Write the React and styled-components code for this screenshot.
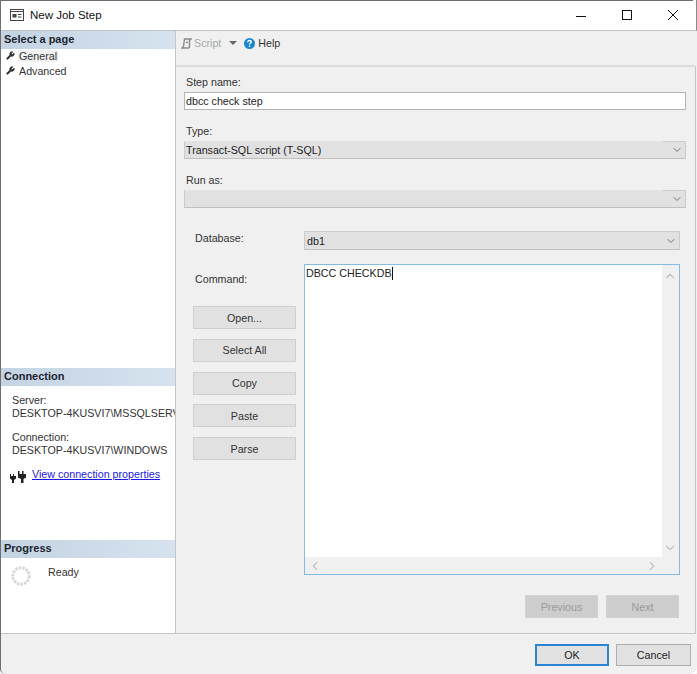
import React from 'react'
import styled, { createGlobalStyle } from 'styled-components'
import { ChevronDown, ChevronUp, ChevronLeft, ChevronRight, Wrench } from 'lucide-react'

const GlobalStyle = createGlobalStyle`
    html, body {
        margin: 0;
        padding: 0;
        background: #fff;
    }
    * {
        box-sizing: border-box;
    }
`;

const Window = styled.div`
    width: 697px;
    height: 674px;
    display: flex;
    flex-direction: column;
    background: #f0f0f0;
    border-left: 1px solid #6e6e6e;
    border-bottom-left-radius: 5px;
    border-bottom-right-radius: 7px;
    font-family: "Liberation Sans", Arial, sans-serif;
    font-size: 10.7px;
    color: #222;
    overflow: hidden;
`;

const TitleBar = styled.div`
    height: 31px;
    flex: none;
    display: flex;
    align-items: center;
    background: linear-gradient(#6e6e6e, #6e6e6e) no-repeat 0 0 / 692px 1px, #fff;
    border-right: 1px solid #8a8a8a;
    border-bottom: 1px solid #c4c4c4;
    padding-left: 9px;
`;

const TitleText = styled.span`
    font-size: 11.5px;
    color: #111;
    margin-left: 6px;
    flex: 1;
`;

const WindowButton = styled.svg`
    width: 46px;
    height: 12px;
    flex: none;
`;

const Body = styled.div`
    height: 603px;
    flex: none;
    display: flex;
`;

const Sidebar = styled.div`
    width: 175px;
    flex: none;
    display: flex;
    flex-direction: column;
    background: #fff;
    border-right: 1px solid #c4c4c4;
    border-bottom: 1px solid #c4c4c4;
`;

const SideHeader = styled.div`
    height: 18px;
    flex: none;
    padding-left: 3px;
    line-height: 17px;
    font-weight: bold;
    font-size: 11px;
    color: #1c2530;
    background: linear-gradient(90deg, #c4d3e2 0%, #d6e3ef 100%);
`;

const PageList = styled.div`
    height: 320px;
    flex: none;
    margin-top: -1px;
    padding-left: 5px;
`;

const PageItem = styled.div`
    display: flex;
    align-items: center;
    height: 15px;
    gap: 3px;
    color: #333;
`;

const PageLabel = styled.span`
    background: ${p => (p.$active ? '#f1f1f1' : 'transparent')};
    padding: 0 1px;
`;

const ConnectionPane = styled.div`
    height: 154px;
    flex: none;
    padding: 8px 0 0 11px;
    overflow: hidden;
    color: #333;
`;

const InfoLine = styled.div`
    height: 13px;
    line-height: 13px;
    white-space: nowrap;
    margin-bottom: ${p => p.$gap || 0}px;
`;

const LinkRow = styled.div`
    display: flex;
    align-items: flex-start;
    gap: 6px;
    margin-left: -2px;
`;

const Link = styled.a`
    color: #1a1ae6;
    text-decoration: underline;
    cursor: pointer;
`;

const PlugSvg = styled.svg`
    width: 16px;
    height: 12px;
    margin-top: 3px;
`;

const ProgressPane = styled.div`
    display: flex;
    padding: 8px 0 0 10px;
    gap: 17px;
    color: #333;
`;

const Main = styled.div`
    flex: 1;
    display: flex;
    flex-direction: column;
    min-width: 0;
`;

const Toolbar = styled.div`
    height: 36px;
    flex: none;
    display: flex;
    align-items: flex-start;
    padding: 6px 0 0 5px;
    border-bottom: 2px solid #dcdcdc;
    margin-right: 1px;
`;

const ToolItem = styled.span`
    display: flex;
    align-items: center;
    gap: ${p => (p.$disabled ? 2 : 3)}px;
    height: 12px;
    color: ${p => (p.$disabled ? '#a8a8a8' : '#333')};
`;

const Caret = styled.span`
    width: 0;
    height: 0;
    margin: 4px 7px 0 8px;
    border-left: 4px solid transparent;
    border-right: 4px solid transparent;
    border-top: 4px solid #666;
`;

const Form = styled.div`
    flex: 1;
    display: flex;
    flex-direction: column;
    padding: 8px 9px 0 8px;
    border-right: 1px solid #c4c4c4;
    border-bottom: 1px solid #c4c4c4;
    margin-right: 1px;
`;

const FieldLabel = styled.div`
    height: 14px;
    line-height: 14px;
    margin-left: 2px;
    margin-bottom: 3px;
    color: #333;
`;

const TextBox = styled.div`
    height: 18px;
    line-height: 16px;
    padding-left: 1px;
    background: #fff;
    border: 1px solid #b4b4b4;
    color: #222;
    margin-bottom: 14px;
`;

const Select = styled.div`
    height: ${p => p.$h || 18}px;
    display: flex;
    align-items: center;
    justify-content: space-between;
    background: #e1e1e1;
    border: 1px solid #cbcbcb;
    border-top-color: ${p => (p.$notch ? '#e3e3e3' : '#cbcbcb')};
    border-bottom-color: #c0c0c0;
    padding-left: ${p => p.$pl || 1}px;
    color: #222;
    margin-bottom: ${p => p.$mb || 0}px;
`;

const DropButton = styled.span`
    align-self: stretch;
    width: 22px;
    margin-top: -1px;
    padding-right: 2px;
    display: flex;
    align-items: center;
    justify-content: flex-end;
    border-top: 1px solid ${p => (p.$notch ? '#cbcbcb' : 'transparent')};
`;

const CommandGrid = styled.div`
    display: grid;
    grid-template-columns: 120px 376px;
    margin-top: 23px;
`;

const Left = styled.div`
    display: flex;
    flex-direction: column;
    padding-left: 9px;
`;

const SideLabel = styled.div`
    height: 14px;
    line-height: 14px;
    margin: ${p => p.$top || 0}px 0 0 2px;
    color: #333;
`;

const ButtonStack = styled.div`
    display: flex;
    flex-direction: column;
    margin-top: 20px;
    gap: 9.75px;
`;

const SideButton = styled.button`
    width: 103px;
    height: 23px;
    padding: 0;
    font: inherit;
    color: #333;
    background: #e1e1e1;
    border: 1px solid #cfcfcf;
`;

const Editor = styled.div`
    height: 311px;
    margin-top: 14px;
    display: grid;
    grid-template-columns: 1fr 17px;
    grid-template-rows: 1fr 17px;
    background: #fff;
    border: 1px solid #85bce6;
`;

const EditorText = styled.div`
    padding: 2px 0 0 1px;
    line-height: 13px;
    color: #222;
`;

const Cursor = styled.span`
    display: inline-block;
    width: 1px;
    height: 13px;
    background: #111;
    vertical-align: top;
`;

const ScrollV = styled.div`
    grid-row: 1 / 3;
    grid-column: 2;
    background: #f0f0f0;
    display: flex;
    flex-direction: column;
    justify-content: space-between;
    align-items: center;
    padding: 4px 1px 19px 0;
    color: #c2c2c2;
`;

const ScrollH = styled.div`
    background: #f0f0f0;
    display: flex;
    align-items: center;
    justify-content: space-between;
    padding: 0 3px;
    color: #c2c2c2;
`;

const NavRow = styled.div`
    display: flex;
    justify-content: flex-end;
    gap: 8px;
    margin-top: 20px;
    padding-right: 7px;
`;

const NavButton = styled.button`
    width: 73px;
    height: 23px;
    padding: 0;
    font: inherit;
    color: #9a9a9a;
    background: #cdcdcd;
    border: 1px solid #d2d2d2;
`;

const Footer = styled.div`
    flex: 1;
    display: flex;
    justify-content: flex-end;
    align-items: flex-start;
    gap: 7px;
    padding: 10px 6px 0 0;
`;

const DialogButton = styled.button`
    width: ${p => (p.$primary ? 74 : 75)}px;
    height: 22px;
    padding: 0;
    font: inherit;
    color: #222;
    background: #e1e1e1;
    border: ${p => (p.$primary ? '2px solid #2b84d6' : '1px solid #adadad')};
`;

// small drawings from the dialog chrome
const WindowIcon = () => (
    <svg width="14" height="12" viewBox="0 0 14 12" fill="none" stroke="#444" strokeWidth="1">
        <rect x="0.5" y="0.5" width="13" height="11" />
        <path d="M1 2.5h12" />
        <rect x="2.5" y="5" width="4" height="3.5" fill="#444" stroke="none" />
        <path d="M8 5.5h3.5M8 8h3.5" />
    </svg>
)

const ScriptIcon = () => (
    <svg width="11" height="11" viewBox="0 0 11 11" fill="none" stroke="#8a8a8a" strokeWidth="1.4">
        <path d="M3.5 1h6.5l-1.5 1.5v6.5l-1 1H1l1.5-1.5zM5 4.5h2" />
    </svg>
)

const HelpIcon = () => (
    <svg width="11" height="11" viewBox="0 0 11 11" fill="none">
        <circle cx="5.5" cy="5.5" r="5.5" fill="#1c86d1" />
        <path d="M3.7 4.2c0-1.1.8-1.7 1.8-1.7s1.8.6 1.8 1.5c0 1.3-1.8 1.3-1.8 2.5" stroke="#fff" strokeWidth="1.3" />
        <rect x="4.8" y="7.5" width="1.4" height="1.4" fill="#fff" />
    </svg>
)

const PlugIcon = () => (
    <PlugSvg viewBox="0 0 16 12" fill="#222">
        <path d="M8 0h1.5v3H12V0h1.5v3H16v3.5l-2.5 1.5v4h-2.5V8L8 6.5V3z" />
        <path d="M0 3h1v2h2V3h1v2h2v2.5L4 9v3H2V9L0 7.5z" />
    </PlugSvg>
)

const Spinner = () => (
    <svg width="20" height="20" viewBox="0 0 20 20" fill="none">
        <circle cx="10" cy="10" r="8.2" stroke="#d8d8d8" strokeWidth="3" strokeDasharray="2.6 1" />
    </svg>
)

const PageIcon = () => <Wrench size={9} color="#333" fill="#333" strokeWidth={2} />

const Chevron = ({ notch }) => (
    <DropButton $notch={notch}>
        <ChevronDown size={12} color="#666" strokeWidth={1.8} />
    </DropButton>
)

export default function App() {
    return (
        <Window>
            <GlobalStyle />
            <TitleBar>
                <WindowIcon />
                <TitleText>New Job Step</TitleText>
                <WindowButton viewBox="0 0 46 12">
                    <path d="M18 7.5h10" stroke="#111" fill="none" />
                </WindowButton>
                <WindowButton viewBox="0 0 46 12">
                    <rect x="18.5" y="1.5" width="9" height="9" stroke="#111" fill="none" />
                </WindowButton>
                <WindowButton viewBox="0 0 46 12">
                    <path d="M18 1l10 10M28 1L18 11" stroke="#111" fill="none" />
                </WindowButton>
            </TitleBar>
            <Body>
                <Sidebar>
                    <SideHeader>Select a page</SideHeader>
                    <PageList>
                        <PageItem><PageIcon /><PageLabel $active>General</PageLabel></PageItem>
                        <PageItem><PageIcon /><PageLabel>Advanced</PageLabel></PageItem>
                    </PageList>
                    <SideHeader>Connection</SideHeader>
                    <ConnectionPane>
                        <InfoLine>Server:</InfoLine>
                        <InfoLine $gap={11}>DESKTOP-4KUSVI7\MSSQLSERVER</InfoLine>
                        <InfoLine>Connection:</InfoLine>
                        <InfoLine $gap={11}>DESKTOP-4KUSVI7\WINDOWS</InfoLine>
                        <LinkRow>
                            <PlugIcon />
                            <Link>View connection properties</Link>
                        </LinkRow>
                    </ConnectionPane>
                    <SideHeader>Progress</SideHeader>
                    <ProgressPane>
                        <Spinner />
                        <span>Ready</span>
                    </ProgressPane>
                </Sidebar>
                <Main>
                    <Toolbar>
                        <ToolItem $disabled><ScriptIcon />Script</ToolItem>
                        <Caret />
                        <ToolItem><HelpIcon />Help</ToolItem>
                    </Toolbar>
                    <Form>
                        <FieldLabel>Step name:</FieldLabel>
                        <TextBox>dbcc check step</TextBox>
                        <FieldLabel>Type:</FieldLabel>
                        <Select $notch $mb={14}>Transact-SQL script (T-SQL)<Chevron notch /></Select>
                        <FieldLabel>Run as:</FieldLabel>
                        <Select $notch><span /><Chevron notch /></Select>
                        <CommandGrid>
                            <Left>
                                <SideLabel>Database:</SideLabel>
                                <SideLabel $top={27}>Command:</SideLabel>
                                <ButtonStack>
                                    <SideButton>Open...</SideButton>
                                    <SideButton>Select All</SideButton>
                                    <SideButton>Copy</SideButton>
                                    <SideButton>Paste</SideButton>
                                    <SideButton>Parse</SideButton>
                                </ButtonStack>
                            </Left>
                            <div>
                                <Select $h={19} $pl={2}>db1<Chevron /></Select>
                                <Editor>
                                    <EditorText>DBCC CHECKDB<Cursor /></EditorText>
                                    <ScrollV>
                                        <ChevronUp size={14} strokeWidth={2} />
                                        <ChevronDown size={14} strokeWidth={2} />
                                    </ScrollV>
                                    <ScrollH>
                                        <ChevronLeft size={14} strokeWidth={2} />
                                        <ChevronRight size={14} strokeWidth={2} />
                                    </ScrollH>
                                </Editor>
                            </div>
                        </CommandGrid>
                        <NavRow>
                            <NavButton disabled>Previous</NavButton>
                            <NavButton disabled>Next</NavButton>
                        </NavRow>
                    </Form>
                </Main>
            </Body>
            <Footer>
                <DialogButton $primary>OK</DialogButton>
                <DialogButton>Cancel</DialogButton>
            </Footer>
        </Window>
    )
}
